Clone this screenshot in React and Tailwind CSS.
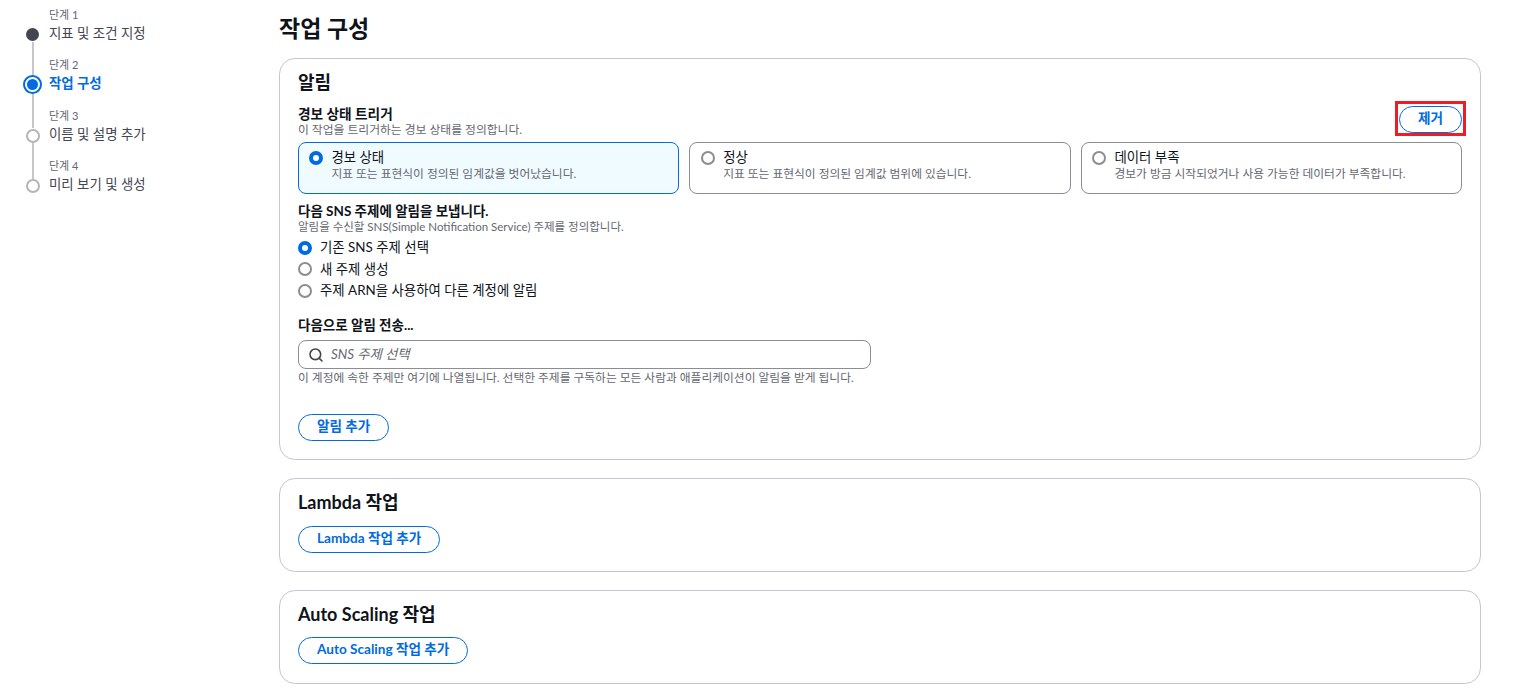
import { Search } from "lucide-react";

function Radio({ checked }) {
    return checked ? (
        <span className="mt-[1px] block h-[14px] w-[14px] shrink-0 rounded-full border-[4px] border-[#006ce0] bg-white" />
    ) : (
        <span className="mt-[1px] block h-[14px] w-[14px] shrink-0 rounded-full border-2 border-[#8c8c94] bg-white" />
    );
}

function Step({ label, title, state, last }) {
    return (
        <div className="flex h-[50.3px] gap-[7px]">
            <div className="relative flex w-[19px] shrink-0 flex-col items-center">
                {state === "done" && <span className="absolute top-[28px] h-[13px] w-[13px] rounded-full bg-[#424650]" />}
                {state === "active" && (
                    <span className="absolute top-[25px] z-10 flex h-[19px] w-[19px] items-center justify-center rounded-full border-2 border-[#006ce0] bg-white">
                        <span className="h-[11px] w-[11px] rounded-full bg-[#006ce0]" />
                    </span>
                )}
                {state === "todo" && <span className="absolute top-[28px] z-10 h-[14px] w-[14px] rounded-full border-2 border-[#b4b4bb] bg-white" />}
                {!last && <span className="absolute top-[42px] h-[36px] w-[2px] bg-[#c6c6cd]" />}
            </div>
            <div className="pt-[8px]">
                <div className="text-[11px] leading-[14px] text-[#656871]">{label}</div>
                <div className={state === "active" ? "mt-[2px] text-[13.4px] font-semibold leading-[19px] text-[#006ce0]" : "mt-[2px] text-[13.4px] leading-[19px] text-[#424650]"}>{title}</div>
            </div>
        </div>
    );
}

function Tile({ checked, title, desc }) {
    return (
        <div className={checked ? "flex h-[52px] gap-[8px] rounded-lg border border-[#006ce0] bg-[#f0fbff] pl-[10.4px] pt-[7px]" : "flex h-[52px] gap-[8px] rounded-lg border border-[#8c8c94] bg-white pl-[10.8px] pt-[7px]"}>
            <Radio checked={checked} />
            <div className="-mt-[1px]">
                <div className="text-[13.4px] leading-[17px] text-[#0f141a]">{title}</div>
                <div className="text-[11.75px] leading-[15px] text-[#656871]">{desc}</div>
            </div>
        </div>
    );
}

function PillButton({ children }) {
    return (
        <button className="h-[27px] rounded-full border border-[#006ce0] bg-white px-[18px] pb-[2px] text-[13.6px] font-bold leading-[23px] text-[#006ce0]">
            {children}
        </button>
    );
}

function ActionCard({ title, button, gapClass }) {
    return (
        <section className="h-[94px] rounded-2xl border border-[#c6c6cd] px-[18px] pt-[11px]">
            <h2 className="text-[18px] font-bold leading-[24px] text-[#0f141a]">{title}</h2>
            <div className={gapClass}>
                <PillButton>{button}</PillButton>
            </div>
        </section>
    );
}

export default function App() {
    return (
        <div
            className="flex h-[688px] w-[1534px] overflow-hidden bg-white"
            style={{ fontFamily: 'Lato, "Noto Sans CJK KR", sans-serif' }}
        >
            <nav className="w-[279px] shrink-0 pl-[23px]">
                <Step label="단계 1" title="지표 및 조건 지정" state="done" />
                <Step label="단계 2" title="작업 구성" state="active" />
                <Step label="단계 3" title="이름 및 설명 추가" state="todo" />
                <Step label="단계 4" title="미리 보기 및 생성" state="todo" last />
            </nav>

            <main className="w-[1202px] shrink-0">
                <h1 className="pt-[12px] text-[23px] font-bold leading-[32px] text-[#0f141a]">작업 구성</h1>

                <section className="mt-[14px] h-[402px] rounded-2xl border border-[#c6c6cd] px-[18px] pt-[11px]">
                    <h2 className="text-[18px] font-bold leading-[24px] text-[#0f141a]">알림</h2>

                    <div className="mt-[11px] flex items-start justify-between">
                        <div>
                            <div className="text-[13.7px] font-bold leading-[18px] text-[#0f141a]">경보 상태 트리거</div>
                            <div className="text-[11.8px] leading-[13px] text-[#656871]">이 작업을 트리거하는 경보 상태를 정의합니다.</div>
                        </div>
                        <div className="relative">
                            <PillButton>제거</PillButton>
                            <span className="absolute -inset-x-[4px] -top-[4px] h-[35px] border-[3px] border-[#ee1c25]" />
                        </div>
                    </div>

                    <div className="mt-[6px] grid grid-cols-3 gap-[10px]">
                        <Tile checked title="경보 상태" desc="지표 또는 표현식이 정의된 임계값을 벗어났습니다." />
                        <Tile title="정상" desc="지표 또는 표현식이 정의된 임계값 범위에 있습니다." />
                        <Tile title="데이터 부족" desc="경보가 방금 시작되었거나 사용 가능한 데이터가 부족합니다." />
                    </div>

                    <div className="mt-[8px] text-[13.5px] font-bold leading-[18px] text-[#0f141a]">다음 SNS 주제에 알림을 보냅니다.</div>
                    <div className="text-[11.5px] leading-[14px] text-[#656871]">알림을 수신할 SNS(Simple Notification Service) 주제를 정의합니다.</div>

                    <div className="mt-[4px] flex flex-col gap-[3.5px] text-[13.4px] leading-[18px] text-[#0f141a]">
                        <label className="flex items-center gap-[8px]"><Radio checked />기존 SNS 주제 선택</label>
                        <label className="flex items-center gap-[8px]"><Radio />새 주제 생성</label>
                        <label className="flex items-center gap-[8px]"><Radio />주제 ARN을 사용하여 다른 계정에 알림</label>
                    </div>

                    <div className="mt-[17px] text-[13.5px] font-bold leading-[18px] text-[#0f141a]">다음으로 알림 전송...</div>
                    <div className="mt-[6px] flex h-[29px] w-[573px] items-center gap-[7px] rounded-lg border border-[#8c8c94] pl-[9px]">
                        <Search size={16} strokeWidth={2.4} className="text-[#424650]" />
                        <span className="text-[13.4px] italic text-[#656871]">SNS 주제 선택</span>
                    </div>
                    <div className="mt-[2px] text-[11.75px] leading-[14px] text-[#656871]">이 계정에 속한 주제만 여기에 나열됩니다. 선택한 주제를 구독하는 모든 사람과 애플리케이션이 알림을 받게 됩니다.</div>

                    <div className="mt-[28px]">
                        <PillButton>알림 추가</PillButton>
                    </div>
                </section>

                <div className="mt-[18px] flex flex-col gap-[18px]">
                    <ActionCard title="Lambda 작업" button="Lambda 작업 추가" gapClass="mt-[11px]" />
                    <ActionCard title="Auto Scaling 작업" button="Auto Scaling 작업 추가" gapClass="mt-[10px]" />
                </div>
            </main>
        </div>
    );
}
